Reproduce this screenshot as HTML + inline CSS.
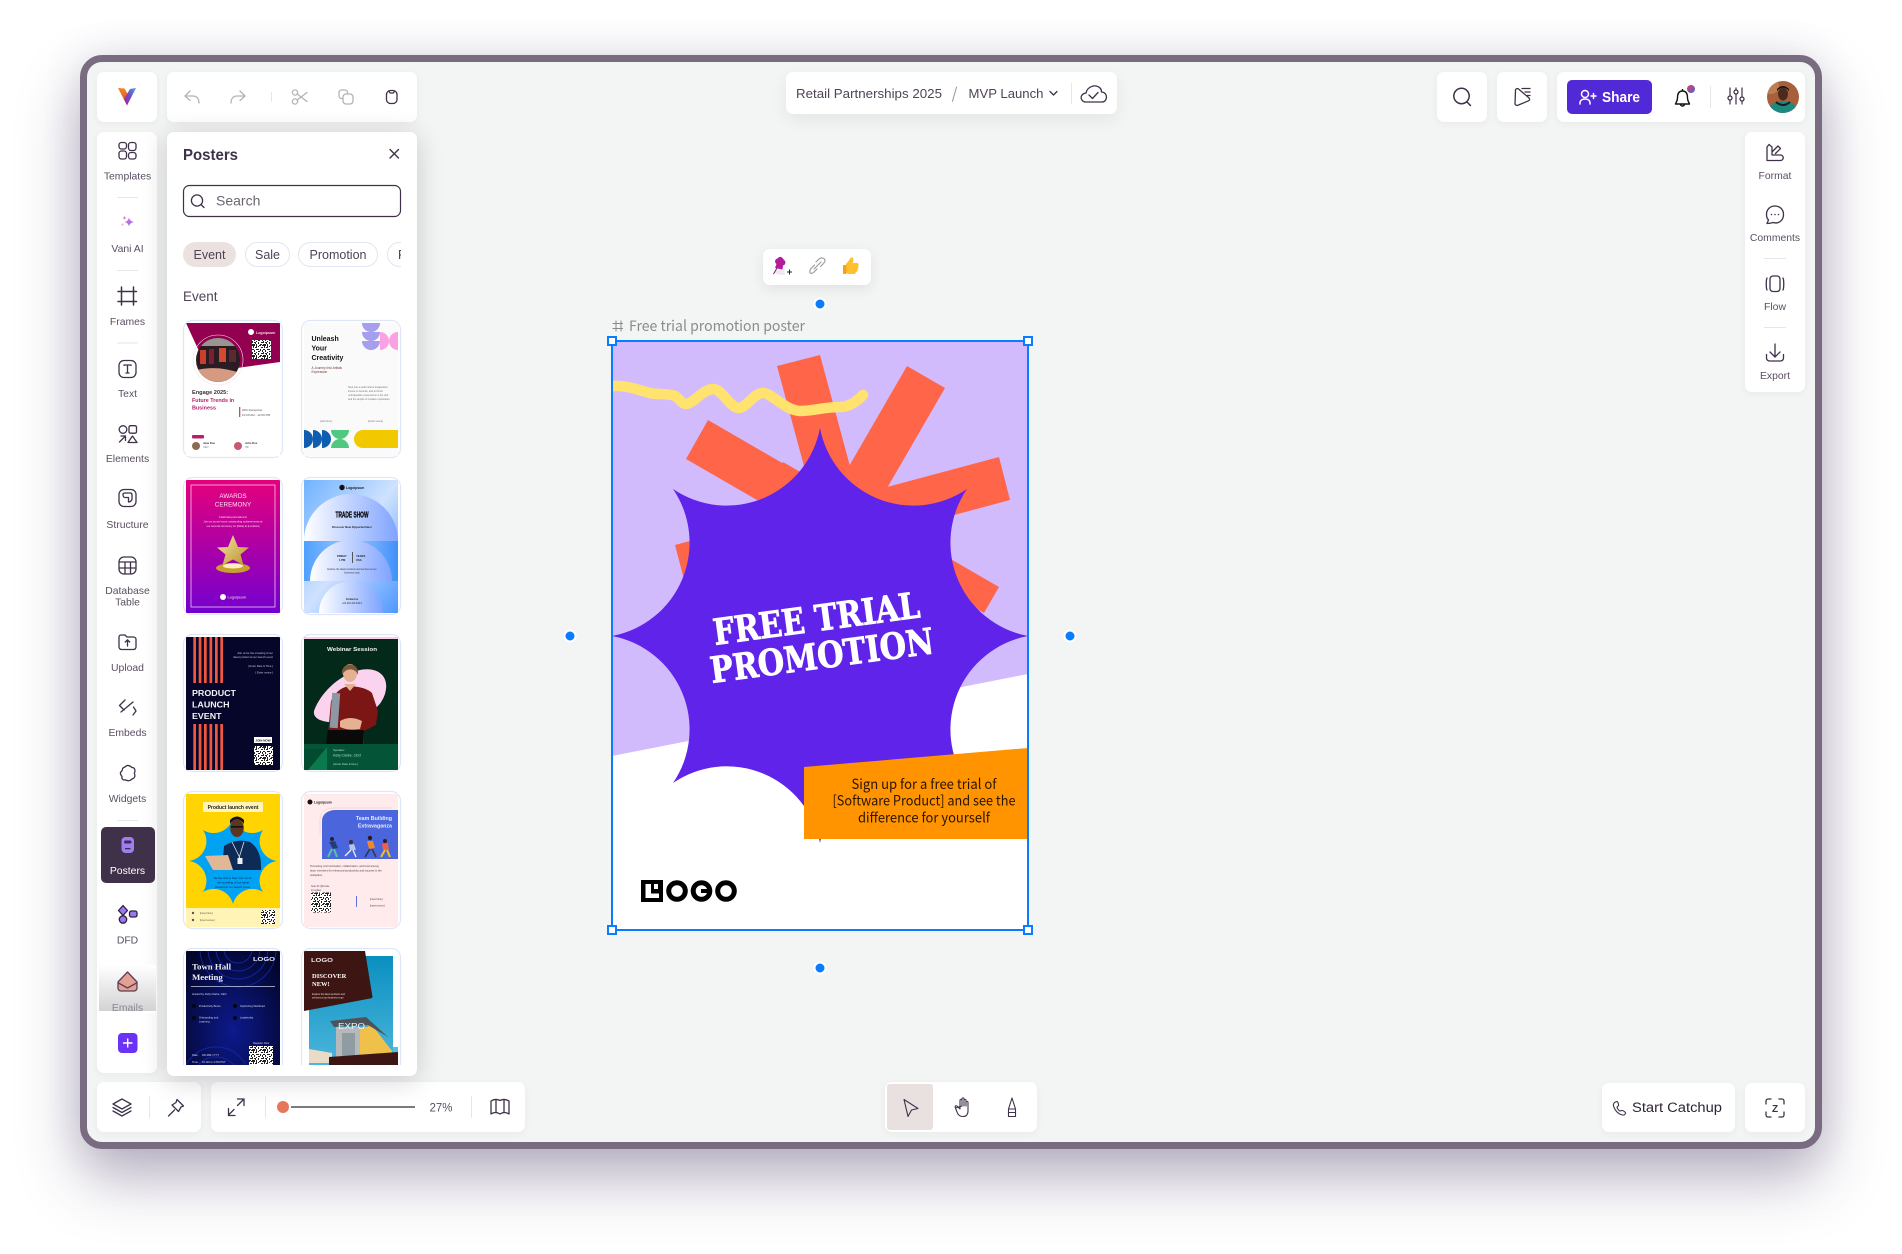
<!DOCTYPE html>
<html lang="en"><head><meta charset="utf-8"><title>Posters</title>
<style>
html,body{margin:0;padding:0;background:#fff;width:1902px;height:1254px;overflow:hidden}
body{position:relative;font-family:"Liberation Sans",sans-serif}
.frame{position:absolute;left:80px;top:55px;width:1728px;height:1080px;border:7px solid #7a6c80;border-radius:22px;background:#f3f5f4;box-shadow:0 30px 60px rgba(65,50,95,.36),0 0 40px rgba(65,50,95,.12)}
.c{position:absolute;background:#fff;border-radius:7px;box-shadow:0 2px 8px rgba(40,30,60,.05)}
svg{position:absolute;left:0;top:0}
text{font-family:"Liberation Sans",sans-serif}
.l{font-size:10.4px;fill:#5a4e63;text-anchor:middle}
.i{fill:none;stroke:#3f3149;stroke-width:1.3;stroke-linecap:round;stroke-linejoin:round}
.g{fill:none;stroke:#b4b2b6;stroke-width:1.3;stroke-linecap:round;stroke-linejoin:round}
.s{stroke:#e6e5e8;stroke-width:1}
.b{font-weight:700}
</style></head><body>
<div class="frame"></div>
<div class="c" style="left:97px;top:72px;width:60px;height:50px"></div>
<div class="c" style="left:167px;top:72px;width:250px;height:50px"></div>
<div class="c" style="left:97px;top:132px;width:60px;height:941px"></div>
<div class="c" style="left:786px;top:72px;width:331px;height:42px;box-shadow:0 6px 16px rgba(40,30,60,.07)"></div>
<div class="c" style="left:1437px;top:72px;width:50px;height:50px"></div>
<div class="c" style="left:1497px;top:72px;width:50px;height:50px"></div>
<div class="c" style="left:1557px;top:72px;width:248px;height:50px"></div>
<div class="c" style="left:1745px;top:132px;width:60px;height:260px"></div>
<div class="c" style="left:97px;top:1082px;width:104px;height:50px"></div>
<div class="c" style="left:211px;top:1082px;width:314px;height:50px"></div>
<div class="c" style="left:885px;top:1082px;width:152px;height:50px"></div>
<div class="c" style="left:1602px;top:1083px;width:133px;height:49px"></div>
<div class="c" style="left:1745px;top:1083px;width:60px;height:49px"></div>
<div class="c" style="left:763px;top:249px;width:108px;height:36px;box-shadow:0 4px 12px rgba(40,30,60,.09)"></div>
<div class="c" style="left:167px;top:132px;width:250px;height:944px;box-shadow:0 4px 26px rgba(30,25,45,.2)"></div>

<svg width="1902" height="1254" viewBox="0 0 1902 1254" xmlns="http://www.w3.org/2000/svg">
<defs>
<linearGradient id="vo" x1="0" y1="0" x2="0" y2="1"><stop offset="0" stop-color="#f58220"/><stop offset="1" stop-color="#d64b3a"/></linearGradient>
<linearGradient id="vb" x1="1" y1="0" x2="0" y2="1"><stop offset="0" stop-color="#4a9cf0"/><stop offset=".5" stop-color="#6a4fc8"/><stop offset="1" stop-color="#b01c8e"/></linearGradient>
<linearGradient id="em" x1="0" y1="0" x2="0" y2="1"><stop offset="0" stop-color="#fff"/><stop offset="1" stop-color="#d3d3d5"/></linearGradient>
<linearGradient id="aw" x1="0" y1="0" x2="0" y2="1"><stop offset="0" stop-color="#e5007c"/><stop offset="1" stop-color="#7300cf"/></linearGradient>
<linearGradient id="ts" x1="0" y1="0" x2="1" y2="1"><stop offset="0" stop-color="#6fb2ff"/><stop offset=".5" stop-color="#cfe2ff"/><stop offset="1" stop-color="#4d97ff"/></linearGradient>
<linearGradient id="ts2" x1="0" y1="0" x2="1" y2="0"><stop offset="0" stop-color="#fff"/><stop offset="1" stop-color="#7ea3ff"/></linearGradient>
<linearGradient id="ts3" x1="0" y1="0" x2="1" y2="0"><stop offset="0" stop-color="#4fa0ff"/><stop offset=".5" stop-color="#9fc8ff"/><stop offset="1" stop-color="#3f90fa"/></linearGradient>
<linearGradient id="gold" x1="0" y1="0" x2="1" y2="1"><stop offset="0" stop-color="#f7e6a0"/><stop offset="1" stop-color="#b98f2c"/></linearGradient>
<radialGradient id="nv" cx=".5" cy=".6" r=".7"><stop offset="0" stop-color="#0c1a8c"/><stop offset="1" stop-color="#03052a"/></radialGradient>
<linearGradient id="sky" x1="0" y1="0" x2="0" y2="1"><stop offset="0" stop-color="#0a8fc0"/><stop offset="1" stop-color="#57bde0"/></linearGradient>
<linearGradient id="sp" x1="0" y1="0" x2="1" y2="1"><stop offset="0" stop-color="#f36fd0"/><stop offset="1" stop-color="#7b6cf0"/></linearGradient>
<linearGradient id="dot" x1="0" y1="0" x2="1" y2="1"><stop offset="0" stop-color="#e5405a"/><stop offset="1" stop-color="#4a5fe0"/></linearGradient>
<pattern id="qr" width="11" height="11" patternUnits="userSpaceOnUse">
<rect width="11" height="11" fill="#fff"/><path d="M0 0h3v1h-3zM4 0h1v2h-1zM7 0h2v1h-2zM10 0h1v1h-1zM1 1h1v2h-1zM6 1h1v1h-1zM9 2h2v1h-2zM3 2h2v1h-2zM0 4h2v1h-2zM4 4h3v1h-3zM8 4h1v2h-1zM2 5h1v2h-1zM6 6h2v1h-2zM10 5h1v2h-1zM0 7h1v2h-1zM4 7h1v1h-1zM9 8h2v1h-2zM2 8h2v1h-2zM6 8h1v2h-1zM0 10h3v1h-3zM4 10h1v1h-1zM8 10h2v1h-2zM3 9h1v1h-1z" fill="#222"/></pattern>
<clipPath id="tc"><rect width="94" height="133" rx="1"/></clipPath>
<clipPath id="sc"><rect x="168" y="132" width="248" height="933"/></clipPath>
<clipPath id="ch"><rect x="183" y="240" width="218" height="30"/></clipPath>
<clipPath id="pc"><rect x="612" y="341" width="416" height="589"/></clipPath>
<clipPath id="ac"><circle cx="1783" cy="97" r="16"/></clipPath>
<clipPath id="c1"><circle cx="32" cy="37" r="22"/></clipPath>
</defs>

<!-- logo -->
<path d="M118 88L124.500 88.500 129.500 97 127 105.500Z" fill="url(#vo)"/>
<path d="M136 88L130 89 124 99 127 105.500Z" fill="url(#vb)"/>

<!-- top tools -->
<path class="g" d="M190 91L185 96 190 100.500M185 96H193C197 96 199 99 199 103"/>
<path class="g" d="M240 91L245 96 240 100.500M245 96H237C233 96 231 99 231 103"/>
<path class="s" d="M271.500 92V102" stroke="#ddd"/>
<g class="g"><circle cx="295" cy="92.500" r="2.600"/><circle cx="295" cy="101.500" r="2.600"/><path d="M297.200 94L307 101.500M297.200 100L307 92.500"/></g>
<g class="g"><rect x="343" y="94" width="10" height="10" rx="3"/><path d="M347.500 93.500V92.500A2.500 2.500 0 0 0 345 90H341.500A2.500 2.500 0 0 0 339 92.500V96A2.500 2.500 0 0 0 341.500 98.500H342"/></g>
<g class="i"><rect x="386.500" y="90.500" width="10.500" height="13" rx="4"/><path d="M389 91L390 93H393.500L394.500 91"/></g>

<!-- rail -->
<g class="i"><rect x="119" y="142.500" width="7.500" height="6.500" rx="2.500"/><rect x="128.500" y="142.500" width="7.500" height="8" rx="2.500"/><rect x="119" y="151" width="7.500" height="8" rx="2.500"/><rect x="128.500" y="152.500" width="7.500" height="6.500" rx="2.500"/></g>
<text class="l" x="127.500" y="179.500">Templates</text>
<path class="s" d="M117 197.500H138M117 270.500H138M117 343H138M117 820.500H138"/>
<path d="M129 217.500Q129.700 221.300 134 222Q129.700 222.700 129 226.500Q128.300 222.700 124.500 222Q128.300 221.300 129 217.500Z" fill="url(#sp)"/>
<path d="M124.500 215.500Q124.800 217.500 126.500 218Q124.800 218.500 124.500 220Q124.200 218.500 122.500 218Q124.200 217.500 124.500 215.500Z" fill="#ee7fd2"/><circle cx="122.500" cy="224.500" r="1" fill="#f3a0dc"/>
<text class="l" x="127.500" y="252">Vani AI</text>
<path class="i" style="stroke-width:1.500" d="M121.500 287V305M133.500 287V305M118 291.500H136.500M118 301.500H136.500"/>
<text class="l" x="127.500" y="325">Frames</text>
<rect class="i" x="119" y="360.500" width="17" height="17" rx="5"/><path class="i" d="M124 365.500V365H131V365.500M127.500 365V373M126 373H129"/>
<text class="l" x="127.500" y="397">Text</text>
<g class="i"><circle cx="123" cy="429.500" r="3.800"/><rect x="129" y="425.700" width="7.500" height="7.500" rx="1.500"/><path d="M119.500 442L125.500 436M121 436H125.500V440.500"/><path d="M132.500 436L137 442.500H128Z"/></g>
<text class="l" x="127.500" y="462">Elements</text>
<g class="i"><rect x="119" y="489.500" width="17" height="17" rx="5"/><path d="M123 494.500C123 493.500 124 493 125 493H130.500C131.500 493 132 494 132 495V499C132 500.500 130 502 128.500 502V497.500H125C124 497.500 123 496.500 123 495Z"/></g>
<text class="l" x="127.500" y="528">Structure</text>
<g class="i"><rect x="119" y="557" width="17" height="17" rx="5"/><path d="M119.500 562H135.500M119.500 568H135.500M125 562V573.500M130.500 562V573.500"/></g>
<text class="l" x="127.500" y="594">Database</text><text class="l" x="127.500" y="605.500">Table</text>
<g class="i"><path d="M119 637A2 2 0 0 1 121 635H125L127 637H133.500A2.500 2.500 0 0 1 136 639.500V647A2.500 2.500 0 0 1 133.500 649.500H121.500A2.500 2.500 0 0 1 119 647Z"/><path d="M127.500 646V640M125.300 642L127.500 639.800 129.700 642"/></g>
<text class="l" x="127.500" y="671">Upload</text>
<path class="i" d="M125 700L119.500 705.500 124 710M121 712L133 702M133.500 707L136 711 133 715"/>
<text class="l" x="127.500" y="736">Embeds</text>
<path class="i" d="M127 765.500C130 765 131 767 132 767.500C134 767.500 135 769 135 771C135 772 134 773 134.500 774C135.500 776 134.500 778 133 778.500C131.500 779 131 780.500 129.500 780.500C128 781.500 126 779.500 124.500 780C122.500 780 121.500 778.500 122 776.500C121 775.500 120 774.500 120.500 772.500C121.500 771 122.500 771 122.500 769C123 767 125 767.500 127 765.500Z"/>
<text class="l" x="127.500" y="802">Widgets</text>
<rect x="101" y="827" width="54" height="56" rx="5" fill="#3f3149"/>
<rect x="121.500" y="837" width="12.500" height="16" rx="4" fill="#a07df0"/><rect x="124" y="840.500" width="7.500" height="3" rx="1.500" fill="#3f3149"/><rect x="125" y="848" width="5.500" height="1.300" fill="#3f3149"/>
<text class="l" x="127.500" y="874" style="fill:#fff">Posters</text>
<g fill="#9a78ee" stroke="#2d2240" stroke-width="1.300"><path d="M123 905.500L127.500 910.500 123 915.500 118.500 910.500Z" stroke-linejoin="round"/><rect x="129.500" y="911" width="7.500" height="6" rx="1.800"/><circle cx="123" cy="919.500" r="3.700"/></g>
<text class="l" x="127.500" y="943.500">DFD</text>
<rect x="99" y="965" width="57" height="46" fill="url(#em)"/>
<rect x="99" y="1011" width="57" height="2" fill="#fff"/>
<path d="M118 982L127.500 972 137 982V988A3 3 0 0 1 134 991H121A3 3 0 0 1 118 988Z" fill="#e6a093" stroke="#5a4056" stroke-width="1.300" stroke-linejoin="round"/>
<path d="M118.500 983L127.500 988 136.500 983" fill="none" stroke="#5a4056" stroke-width="1.300"/>
<text class="l" x="127.500" y="1011" style="fill:#8a858f">Emails</text>
<rect x="118" y="1033" width="19.500" height="20" rx="4" fill="#6a32f5"/><path d="M127.700 1038.500V1047.500M123 1043H132.500" stroke="#fff" stroke-width="1.400"/>

<!-- panel -->
<text x="183" y="160" font-size="16" font-weight="700" fill="#3f3149" textLength="55" lengthAdjust="spacingAndGlyphs">Posters</text>
<path class="i" d="M390 149.500L398.500 158M398.500 149.500L390 158" style="stroke-width:1.400"/>
<rect x="183.500" y="185.500" width="217" height="31" rx="6" fill="#fff" stroke="#3f3149" stroke-width="1.200"/>
<circle class="i" cx="197" cy="200.500" r="5.600"/><path class="i" d="M201 204.500L204 207.500"/>
<text x="216" y="205.500" font-size="14" fill="#6b6470">Search</text>
<g clip-path="url(#ch)">
<rect x="183" y="242" width="53" height="25" rx="12.500" fill="#ebe2e0"/>
<text x="209.500" y="259" font-size="12.500" fill="#4f4357" text-anchor="middle">Event</text>
<rect x="245.500" y="242.500" width="44" height="24" rx="12" fill="#fff" stroke="#e3e5f2"/>
<text x="267.500" y="259" font-size="12.500" fill="#4f4357" text-anchor="middle">Sale</text>
<rect x="298.500" y="242.500" width="79" height="24" rx="12" fill="#fff" stroke="#e3e5f2"/>
<text x="338" y="259" font-size="12.500" fill="#4f4357" text-anchor="middle">Promotion</text>
<rect x="387.500" y="242.500" width="60" height="24" rx="12" fill="#fff" stroke="#e3e5f2"/>
<text x="398" y="259" font-size="12.500" fill="#4f4357">Product</text>
</g>
<text x="183" y="301" font-size="13.500" fill="#4f4357">Event</text>

<g clip-path="url(#sc)">
<g fill="#fff" stroke="#dfe6f8" stroke-width="1.200">
<rect x="183.500" y="320.500" width="99" height="137" rx="9"/><rect x="301.500" y="320.500" width="99" height="137" rx="9"/>
<rect x="183.500" y="477.500" width="99" height="137" rx="9"/><rect x="301.500" y="477.500" width="99" height="137" rx="9"/>
<rect x="183.500" y="634.500" width="99" height="137" rx="9"/><rect x="301.500" y="634.500" width="99" height="137" rx="9"/>
<rect x="183.500" y="791.500" width="99" height="137" rx="9"/><rect x="301.500" y="791.500" width="99" height="137" rx="9"/>
<rect x="183.500" y="948.500" width="99" height="137" rx="9"/><rect x="301.500" y="948.500" width="99" height="137" rx="9"/>
</g>

<!-- T1 -->
<g transform="translate(186 323)" clip-path="url(#tc)">
<rect width="94" height="133" fill="#fff"/>
<path d="M0 0H94V39L44 46H20L12 26Z" fill="#93004f"/>
<circle cx="32" cy="37" r="25" fill="none" stroke="#f6e3ec" stroke-width=".6"/>
<circle cx="32" cy="37" r="22" fill="#2a1c22"/>
<g clip-path="url(#c1)"><rect x="10" y="15" width="44" height="8" fill="#9a9590"/><rect x="14" y="27" width="6" height="14" fill="#c8402c"/><rect x="23" y="26" width="5" height="15" fill="#7b2030"/><rect x="33" y="25" width="7" height="14" fill="#d24a30"/><rect x="43" y="27" width="7" height="12" fill="#5a2a30"/><path d="M10 47Q32 42 54 50V60H10Z" fill="#d49a82"/></g>
<rect x="66" y="17" width="19" height="19" fill="url(#qr)"/>
<circle cx="65" cy="9" r="3" fill="#fff"/><text x="70" y="11" font-size="3.600" fill="#f5d8e6" class="b">Logoipsum</text>
<text x="6" y="71" font-size="5.600" font-weight="700" fill="#3a3034">Engage 2025:</text>
<text x="6" y="79" font-size="5.400" font-weight="700" fill="#b81d6e">Future Trends in</text>
<text x="6" y="86.500" font-size="5.400" font-weight="700" fill="#b81d6e">Business</text>
<rect x="53" y="84" width="1.300" height="10" fill="#c04a88"/><text x="56" y="88" font-size="3" fill="#555">20th December</text><text x="56" y="93" font-size="3" fill="#555">10:00 AM - 12:00 PM</text>
<rect x="6" y="112" width="12" height="3.500" rx="1" fill="#b81d6e"/>
<circle cx="10" cy="123" r="4" fill="#8c6a52"/><text x="17" y="121" font-size="2.700" class="b" fill="#333">Jane Doe</text><text x="17" y="125" font-size="2.500" fill="#777">CEO</text>
<circle cx="52" cy="123" r="4" fill="#c85a6e"/><text x="59" y="121" font-size="2.700" class="b" fill="#333">John Doe</text><text x="59" y="125" font-size="2.500" fill="#777">HR</text>
</g>
<!-- T2 -->
<g transform="translate(304 323)" clip-path="url(#tc)">
<rect width="94" height="133" fill="#fafafa"/>
<text x="7.500" y="18" font-size="7" font-weight="700" fill="#111">Unleash</text><text x="7.500" y="27.500" font-size="7" font-weight="700" fill="#111">Your</text><text x="7.500" y="37" font-size="7" font-weight="700" fill="#111">Creativity</text>
<text x="7.500" y="46" font-size="3.200" fill="#6b3b3b">A Journey Into Artistic</text><text x="7.500" y="50" font-size="3.200" fill="#6b3b3b">Expression</text>
<g font-size="2.500" fill="#777"><text x="44" y="65">Step into a world where imagination</text><text x="44" y="69">knows no bounds, and art finds</text><text x="44" y="73">unforgettable expressions in the ebb</text><text x="44" y="77">and the depths of creative exploration</text><text x="16" y="99">[start time]</text><text x="64" y="99">[insert venue]</text></g>
<g fill="#a59fee"><path d="M58 0H76A9 9 0 0 1 58 0Z"/><path d="M58 9H76A9 9 0 0 1 58 9Z"/><path d="M58 18H76A9 9 0 0 1 58 18Z"/></g>
<path d="M76 9A9 9 0 0 1 76 27Z" fill="#fba0e3"/><path d="M94 9A9 9 0 0 0 94 27Z" fill="#fba0e3"/>
<path d="M0 107A9 9 0 0 1 0 125ZM9 107A9 9 0 0 1 9 125ZM18 107A9 9 0 0 1 18 125Z" fill="#0f5db0"/>
<path d="M27 107H45A9 9 0 0 1 27 107ZM27 125H45A9 9 0 0 0 27 125Z" fill="#4ec97f"/>
<path d="M59 107H94V125H59A9 9 0 0 1 59 107Z" fill="#f2c800"/>
</g>
<!-- T3 -->
<g transform="translate(186 480)" clip-path="url(#tc)">
<rect width="94" height="133" fill="url(#aw)"/>
<rect x="5" y="5" width="84" height="122" fill="none" stroke="#f6c4ea" stroke-width=".8"/>
<text x="47" y="18" font-size="6.300" fill="#ffe1f1" text-anchor="middle">AWARDS</text><text x="47" y="26.500" font-size="6.300" fill="#ffe1f1" text-anchor="middle">CEREMONY</text>
<g font-size="2.700" fill="#fbd9ef" text-anchor="middle"><text x="47" y="38">Celebrating Excellence!</text><text x="47" y="42.500">Join us as we honor outstanding achievements at</text><text x="47" y="47">our second ceremony on [Date] at [Location]</text></g>
<ellipse cx="47" cy="88" rx="17" ry="5" fill="#c8a02e"/><ellipse cx="47" cy="86" rx="10" ry="2.500" fill="#f8eec0"/>
<path d="M47 55L52 67 63 67.500 54.500 74.500 57.500 85 47 79.500 36.500 85 39.500 74.500 31 67.500 42 67Z" fill="url(#gold)"/>
<circle cx="37" cy="117" r="3" fill="#fff"/><text x="41.500" y="118.500" font-size="3.800" fill="#fbe0f2">Logoipsum</text>
</g>
<!-- T4 -->
<g transform="translate(304 480)" clip-path="url(#tc)">
<rect width="94" height="133" fill="url(#ts)"/>
<path d="M0 61A47 47 0 0 1 94 61Z" fill="url(#ts2)"/>
<rect y="61" width="94" height="40" fill="url(#ts3)"/>
<path d="M6 101A41 41 0 0 1 88 101Z" fill="url(#ts2)"/>
<path d="M15 133A32 32 0 0 1 79 133Z" fill="url(#ts2)"/>
<circle cx="38" cy="7.500" r="2.700" fill="#111"/><text x="42" y="9" font-size="3.400" class="b" fill="#222">Logoipsum</text>
<text x="48" y="37.500" font-size="8" font-weight="700" text-anchor="middle" fill="#0b0b0b" stroke="#0b0b0b" stroke-width=".35" textLength="33" lengthAdjust="spacingAndGlyphs">TRADE SHOW</text>
<text x="48" y="48" font-size="2.900" class="b" text-anchor="middle" fill="#222">Discover New Opportunities!</text>
<g font-size="2.700" class="b" fill="#222"><text x="33" y="77">FRIDAY</text><text x="35" y="81">1 PM</text><text x="52" y="77">YEARS</text><text x="52" y="81">USA</text></g><rect x="48" y="72" width="1" height="11" fill="#555"/>
<text x="48" y="90" font-size="2.400" text-anchor="middle" fill="#334">Explore the latest products and services at our</text><text x="48" y="93.500" font-size="2.400" text-anchor="middle" fill="#334">business expo</text>
<text x="48" y="120" font-size="2.400" class="b" text-anchor="middle" fill="#222">Contact us</text><text x="48" y="124" font-size="2.400" text-anchor="middle" fill="#222">+01 234 123 432 0</text>
</g>
<!-- T5 -->
<g transform="translate(186 637)" clip-path="url(#tc)">
<rect width="94" height="133" fill="#05062a"/>
<g fill="#f1573f"><rect x="7.300" width="2.700" height="46"/><rect x="12.700" width="2.700" height="46"/><rect x="18" width="2.700" height="46"/><rect x="23.500" width="2.700" height="46"/><rect x="29" width="2.700" height="46"/><rect x="34.300" width="2.700" height="46"/>
<rect x="7.300" y="87" width="2.700" height="46"/><rect x="12.700" y="87" width="2.700" height="46"/><rect x="18" y="87" width="2.700" height="46"/><rect x="23.500" y="87" width="2.700" height="46"/><rect x="29" y="87" width="2.700" height="46"/><rect x="34.300" y="87" width="2.700" height="46"/></g>
<g font-size="8.600" font-weight="700" fill="#f4f4f6"><text x="6" y="59" textLength="44" lengthAdjust="spacingAndGlyphs">PRODUCT</text><text x="6" y="70.500" textLength="37.500" lengthAdjust="spacingAndGlyphs">LAUNCH</text><text x="6" y="82" textLength="29.500" lengthAdjust="spacingAndGlyphs">EVENT</text></g>
<g font-size="2.700" fill="#c8c8d4" text-anchor="end"><text x="87" y="17">Join us for the unveiling of our</text><text x="87" y="21">latest product at our launch event</text><text x="87" y="30">[ Enter Date &amp; Time ]</text><text x="87" y="36.500">[ Enter venue ]</text></g>
<rect x="68" y="100" width="18" height="6" fill="#fff"/><text x="77" y="104.500" font-size="3" text-anchor="middle" font-weight="700" fill="#111">JOIN NOW</text>
<rect x="68" y="109" width="19" height="19" fill="url(#qr)"/>
</g>
<!-- T6 -->
<g transform="translate(304 637)" clip-path="url(#tc)">
<rect width="94" height="133" fill="#02291a"/><rect width="94" height="2" fill="#fbcfe8"/>
<text x="48" y="14" font-size="5.500" font-weight="700" fill="#f2f2f2" text-anchor="middle" textLength="50" lengthAdjust="spacingAndGlyphs">Webinar Session</text>
<path d="M10 74C14 62 28 42 52 34C72 28 84 38 82 52C80 68 66 78 50 82C32 88 8 86 10 74Z" fill="#fcd3ee"/>
<path d="M23 108L27 64Q34 50 46 49Q62 50 68 56L74 74 72 88 64 92 60 94V108Z" fill="#7b1614"/>
<path d="M24 93H60L59 108H22Z" fill="#0a0a0a"/>
<rect x="27" y="56" width="8" height="35" fill="#8d98a4" transform="rotate(4 31 73)"/>
<path d="M36 84Q46 78 58 84L56 92Q44 94 36 90Z" fill="#e6b093"/>
<path d="M40 47L46 54 52 47Z" fill="#e6b093"/>
<ellipse cx="46" cy="36" rx="7" ry="9" fill="#e6b093"/>
<path d="M38 38C36 24 56 24 54 38C52 31 42 30 38 38Z" fill="#7b5a3a"/>
<rect y="107" width="94" height="26" fill="#045538"/><rect y="112" width="23" height="21" fill="#024a30"/><path d="M4 133L23 110V133Z" fill="#0a7a4c"/>
<g fill="#b6dccc"><text x="29" y="114" font-size="3">Speaker:</text><text x="29" y="119.500" font-size="3.500">Kelly Clarke, CEO</text><text x="29" y="128" font-size="2.800">[ Enter Date &amp; time ]</text></g>
</g>
<!-- T7 -->
<g transform="translate(186 794)" clip-path="url(#tc)">
<rect width="94" height="133" fill="#ffd400"/><rect y="114" width="94" height="19" fill="#fff4b5"/>
<rect x="17" y="8" width="60" height="10" rx="1" fill="#fff5b8"/>
<text x="47" y="15" font-size="5" font-weight="700" fill="#222" text-anchor="middle">Product launch event</text>
<path d="M47 24A20 20 0 0 0 77 36A20 20 0 0 0 91 67A20 20 0 0 0 77 98A20 20 0 0 0 47 110A20 20 0 0 0 17 98A20 20 0 0 0 3 67A20 20 0 0 0 17 36A20 20 0 0 0 47 24Z" fill="#00a3f4"/>
<path d="M36 76L38 52Q50 44 64 48Q76 56 75 76Z" fill="#0e2b55"/>
<ellipse cx="51" cy="34" rx="6.800" ry="9" fill="#5c3623"/><path d="M44 30Q51 20 58 30V26Q51 19 44 26Z" fill="#151010"/><rect x="45" y="32" width="12" height="1.600" fill="#111"/>
<path d="M19 62L42 61 47 76H27Z" fill="#e0b895"/><path d="M46 48L54 64M58 48L53 64" stroke="#d7e4f4" stroke-width=".8"/><rect x="51.500" y="64" width="5" height="6" fill="#e9f0f6"/>
<g font-size="2.900" fill="#06204a" text-anchor="middle"><text x="47" y="85">Be the first to See! Join us for</text><text x="47" y="89.500">the unveiling of our latest</text><text x="47" y="94">product at our launch event.</text></g>
<g font-size="2.400" fill="#555"><text x="14" y="120">[insert time]</text><text x="14" y="127">[insert venue]</text></g><circle cx="7" cy="119" r="1.200" fill="#555"/><circle cx="7" cy="126" r="1.200" fill="#555"/>
<rect x="75" y="116" width="14" height="14" fill="url(#qr)"/>
</g>
<!-- T8 -->
<g transform="translate(304 794)" clip-path="url(#tc)">
<rect width="94" height="133" fill="#ffeaec"/>
<circle cx="6" cy="8" r="2.500" fill="#111"/><text x="10" y="9.500" font-size="3.300" class="b" fill="#222">Logoipsum</text>
<path d="M16 40V26C16 18 22 14 30 14H88" fill="none" stroke="#e5c9cc" stroke-width=".5"/>
<path d="M18 65V27C18 20 24 16 32 16H94V65Z" fill="#4b66dd"/>
<g font-size="5.300" font-weight="700" fill="#e9ecff" text-anchor="end"><text x="88" y="26">Team Building</text><text x="88" y="33.500">Extravaganza</text></g>
<g><circle cx="28" cy="45" r="2" fill="#223"/><path d="M25 48L31 47 34 54 29 55Z" fill="#273a78"/><path d="M28 55L24 63M30 55L33 63" stroke="#55c4a5" stroke-width="2"/>
<circle cx="47" cy="48" r="2" fill="#4a2a2a"/><path d="M45 51L50 50 52 56 46 56Z" fill="#b0c8e8"/><path d="M47 56L41 62M49 56L52 63" stroke="#f3f3f3" stroke-width="1.300"/>
<circle cx="66" cy="44" r="2.200" fill="#2a1a1a"/><path d="M63 47L69 47 71 54 65 55Z" fill="#f08a25"/><path d="M66 55L61 63M68 55L72 63" stroke="#32395c" stroke-width="1.700"/>
<circle cx="81" cy="47" r="2" fill="#3a1a1a"/><path d="M78 50L84 49 85 56 79 56Z" fill="#ef5f4d"/><path d="M81 56L77 63M83 56L86 63" stroke="#f2c21c" stroke-width="2"/></g>
<g font-size="2.700" fill="#4a4048"><text x="6" y="73">Promoting communication, collaboration, and trust among</text><text x="6" y="77.500">team members for enhanced productivity and success in the</text><text x="6" y="82">workplace.</text>
<text x="7" y="93" font-size="2.300">Scan for QR code</text><text x="7" y="97" font-size="2.300">to register</text><text x="66" y="106" font-size="2.400">[insert time]</text><text x="66" y="112.500" font-size="2.400">[insert venue]</text></g>
<rect x="7" y="98.500" width="20" height="20" fill="url(#qr)"/><rect x="52" y="102" width=".9" height="11" fill="#4b66dd"/>
</g>
<!-- T9 -->
<g transform="translate(186 951)" clip-path="url(#tc)">
<rect width="94" height="133" fill="url(#nv)"/>
<g fill="none" stroke="#0f27a8" stroke-width=".9"><circle cx="52" cy="-2" r="14"/><circle cx="52" cy="-2" r="22"/><circle cx="52" cy="-2" r="30"/><circle cx="52" cy="-2" r="38"/><circle cx="30" cy="130" r="14"/><circle cx="30" cy="130" r="24"/><circle cx="30" cy="130" r="34"/></g>
<g font-size="8.800" font-weight="700" fill="#eceef8"><text x="6" y="18.500" style="font-family:'Liberation Serif',serif">Town Hall</text><text x="6" y="29" style="font-family:'Liberation Serif',serif">Meeting</text></g>
<text x="67" y="10" font-size="5.500" font-weight="700" fill="#eee" textLength="22" lengthAdjust="spacingAndGlyphs">LOGO</text>
<rect x="5" y="35" width="84" height=".8" fill="#bfc2d8"/>
<g font-size="2.700" fill="#d8daf0"><text x="6" y="44">Hosted by Kelly Clarke, CEO</text><text x="13" y="56">Productivity Boost</text><text x="54" y="56">Optimizing Workload</text><text x="13" y="67.500">Onboarding and</text><text x="13" y="71.500">Learning</text><text x="54" y="67.500">Leadership</text><text x="6" y="105">Date :</text><text x="16" y="105">DD-MM-YYYY</text><text x="6" y="112">Time :</text><text x="16" y="112">10 AM to 4 PM PST</text><text x="67" y="93">Register Now</text></g>
<g fill="#050510"><circle cx="8" cy="55" r="2"/><circle cx="49" cy="55" r="2"/><circle cx="8" cy="67" r="2"/><circle cx="49" cy="67" r="2"/></g>
<rect x="63" y="95" width="24" height="24" fill="url(#qr)"/>
</g>
<!-- T10 -->
<g transform="translate(304 951)" clip-path="url(#tc)">
<rect width="94" height="133" fill="#fff"/><rect x="5" y="5" width="84" height="128" fill="url(#sky)"/>
<rect x="89" y="96" width="5" height="10" fill="#57bde0"/>
<path d="M32 76H64V108H32Z" fill="#b5b9ba"/><rect x="38" y="82" width="13" height="28" fill="#8f9ca2"/><path d="M56 78L68 74 88 100V106H56Z" fill="#efc14a"/>
<path d="M26 70L62 66 84 86 64 74 30 76Z" fill="#4d5358"/><path d="M5 98L28 102V112H5Z" fill="#e8dcc8"/>
<text x="34" y="78" font-size="8" fill="#f4f4f4" textLength="27" lengthAdjust="spacingAndGlyphs">EXPO</text>
<path d="M0 0H61L68.500 46Q68.500 47 66 47.500L0 60Z" fill="#3d1513"/>
<path d="M25 106L94 101V133H25Z" fill="#3d1513"/>
<text x="7" y="11" font-size="5" font-weight="700" fill="#f2e8e6" textLength="22" lengthAdjust="spacingAndGlyphs">LOGO</text>
<g font-size="6.500" font-weight="700" fill="#fff"><text x="8" y="27" style="font-family:'Liberation Serif',serif">DISCOVER</text><text x="8" y="35" style="font-family:'Liberation Serif',serif">NEW!</text></g>
<text x="8" y="44" font-size="2.400" fill="#e8d8d4">Explore the latest products and</text><text x="8" y="47.500" font-size="2.400" fill="#e8d8d4">services at our business expo</text>
</g>
</g>

<!-- bottom left -->
<g class="i"><path d="M122 1099L131 1104 122 1109 113 1104Z"/><path d="M113 1107.500L122 1112.500 131 1107.500M113 1111L122 1116 131 1111"/></g>
<path class="s" d="M149.500 1096V1118M265.500 1096V1118M471.500 1096V1118"/>
<path class="i" d="M168.500 1116L174.500 1110M177 1099.500L183.500 1106 181 1107 178.500 1111.500 172 1105 176 1102.500Z"/>
<path class="i" d="M228.500 1115L234 1109.500M244 1099L237.500 1105.500M237.500 1099H244V1105.500M228.500 1108.500V1115.500H235"/>
<circle cx="283" cy="1107" r="6" fill="#e5775a"/><rect x="291" y="1106" width="124" height="2" fill="#7b7b7d"/>
<text x="429.500" y="1111.500" font-size="12" fill="#5a4e63" textLength="23" lengthAdjust="spacingAndGlyphs">27%</text>
<g class="i"><path d="M491 1101C494 1099 497 1099 500 1100.500C503 1099 506 1099 509 1101V1114C506 1112 503 1112 500 1114C497 1112 494 1112 491 1114Z"/><path d="M496 1100V1112.500M504 1100V1112.500"/></g>

<!-- bottom centre -->
<rect x="887" y="1084" width="46" height="46" rx="3" fill="#e9e1e0"/>
<path class="i" d="M904 1099.500L918 1108.500 911.500 1110 908 1116.500Z" style="stroke-width:1.100"/>
<path class="i" style="stroke-width:1.100" d="M955.500 1108L957 1112C958 1115 960 1116.500 963 1116.500C966 1116.500 968 1114.500 968 1111V1102.500C968 1101 966 1101 966 1102.500V1106M966 1106V1100.500C966 1099 964 1099 964 1100.500V1106M964 1106V1099C964 1097.500 962 1097.500 962 1099V1106M962 1106V1100.500C962 1099 960 1099 960 1100.500V1109L957.500 1106.500C956 1105 954.500 1106 955.500 1108Z"/>
<path class="i" style="stroke-width:1.100" d="M1012 1098L1015.500 1109H1008.500ZM1008.500 1109V1116.500H1015.500V1109M1008.500 1112.500H1015.500"/>

<!-- bottom right -->
<path class="i" d="M1617 1101.500C1614 1102 1613 1104 1613.500 1106C1615 1110.500 1618 1114 1622.500 1115C1624 1115.300 1625.500 1114.500 1625.500 1113C1625.500 1112 1622.500 1110 1621.500 1110.500C1620.500 1111 1619.800 1111.300 1619 1110.500C1618 1109.500 1617.500 1108.500 1617 1107.500C1616.800 1106.500 1618 1106.500 1618.500 1105.500C1618.800 1104.500 1618 1102 1617 1101.500Z" style="stroke-width:1.100"/>
<text x="1632" y="1112" font-size="13.500" fill="#2d2533" textLength="90" lengthAdjust="spacingAndGlyphs">Start Catchup</text>
<path class="i" d="M1771 1099H1768A2 2 0 0 0 1766 1101V1104M1779 1099H1782A2 2 0 0 1 1784 1101V1104M1766 1112V1115A2 2 0 0 0 1768 1117H1771M1784 1112V1115A2 2 0 0 1 1782 1117H1779"/>
<text x="1775" y="1112" font-size="10" font-weight="700" fill="#3f3149" text-anchor="middle">Z</text>

<!-- top centre -->
<text x="796" y="98" font-size="13" fill="#4f4357" textLength="146" lengthAdjust="spacingAndGlyphs">Retail Partnerships 2025</text>
<path d="M956.700 86.700L952.300 101.700" stroke="#9a95a0" stroke-width="1"/>
<text x="968.500" y="98" font-size="13" fill="#4f4357" textLength="75" lengthAdjust="spacingAndGlyphs">MVP Launch</text>
<path class="i" d="M1050 91.500L1053.500 95 1057 91.500"/>
<path class="s" d="M1071.500 83V104"/>
<path class="i" d="M1086 102C1080 102 1079 94 1086 93C1087 87 1095 83.500 1100 88C1101 89 1101.500 91 1101.500 92C1108 92 1108 102 1102 102Z"/>
<path class="i" d="M1089 95L1092.500 98.500 1098 92.500"/>

<!-- top right -->
<circle class="i" cx="1461.500" cy="96" r="7.700" style="stroke-width:1.500"/><path class="i" d="M1467 102L1470.500 105.500" style="stroke-width:1.500"/>
<path class="i" d="M1515.500 91C1515 89 1517 88 1518.500 89L1528.500 97.500C1530 98.800 1530 100 1528.500 100.800L1518.500 105C1517 106 1515 105 1515 103.500ZM1522 88.500H1530M1525 92H1530M1527 95.500H1530"/>
<rect x="1567" y="80" width="85" height="34" rx="5" fill="#5129d6"/>
<g fill="none" stroke="#fff" stroke-width="1.500" stroke-linecap="round"><circle cx="1585" cy="94" r="3.500"/><path d="M1580 104V103C1580 100.500 1582 99 1585 99C1588 99 1590 100.500 1590 103V104M1591 96H1596M1593.500 93.500V98.500"/></g>
<text x="1602" y="102" font-size="14.500" font-weight="700" fill="#fff" textLength="38" lengthAdjust="spacingAndGlyphs">Share</text>
<path d="M1682.500 91C1678.500 91 1677.500 94 1677.500 98C1677.500 101 1676 102.500 1675.500 104H1689.500C1689 102.500 1687.500 101 1687.500 98C1687.500 94 1686.500 91 1682.500 91ZM1682.500 91V89M1680.500 104.500C1681 106.500 1684 106.500 1684.500 104.500" fill="none" stroke="#111" stroke-width="1.400" stroke-linejoin="round"/>
<circle cx="1691" cy="89" r="4" fill="url(#dot)"/>
<path class="s" d="M1710.500 86V108"/>
<g class="i"><path d="M1730 88V104M1736 88V104M1742 88V104" style="stroke-width:1.200"/><circle cx="1730" cy="98" r="2" fill="#fff"/><circle cx="1736" cy="92" r="2" fill="#fff"/><circle cx="1742" cy="99" r="2" fill="#fff"/></g>
<g clip-path="url(#ac)"><rect x="1767" y="81" width="32" height="32" fill="#a8603c"/><circle cx="1771" cy="86" r="8" fill="#bd7d55"/><path d="M1769 113C1769 104 1775 101 1783 101C1791 101 1797 104 1797 113Z" fill="#1d8a80"/><path d="M1776 102Q1783 108 1790 102" fill="none" stroke="#1b1b1b" stroke-width="2"/><ellipse cx="1783" cy="94" rx="5" ry="6.500" fill="#4a2a1c"/><path d="M1777 91Q1783 84 1789 91V89Q1783 83 1777 89Z" fill="#111"/></g>

<!-- right panel -->
<g class="i"><path d="M1767 160V147L1769 144.500 1772 147V154.500M1772 152L1778 146 1780.500 148.500 1775.500 153.500M1767 160.500H1780.500A2.700 2.700 0 0 0 1780.500 155H1772"/></g>
<text class="l" x="1775" y="179">Format</text>
<g class="i"><path d="M1775 206C1770 206 1766.500 209.500 1766.500 214.500C1766.500 217 1767.500 219 1768.500 220L1767 223.500C1769 223.500 1771.500 223 1773 222.500C1780 224.500 1783.500 219 1783.500 214.500C1783.500 209.500 1780 206 1775 206Z"/></g>
<g fill="#3f3149"><circle cx="1771.500" cy="214.500" r=".8"/><circle cx="1775" cy="214.500" r=".8"/><circle cx="1778.500" cy="214.500" r=".8"/></g>
<text class="l" x="1775" y="241">Comments</text>
<path class="s" d="M1764 258.500H1786M1764 327.500H1786"/>
<g class="i"><rect x="1770" y="276" width="10" height="15.500" rx="3"/><path d="M1767 278C1766 280 1766 288 1767 290M1783 278C1784 280 1784 288 1783 290"/></g>
<text class="l" x="1775" y="310">Flow</text>
<path class="i" d="M1775 344V356.500M1770 352L1775 357 1780 352M1766.500 354.500V358A3 3 0 0 0 1769.500 361H1780.500A3 3 0 0 0 1783.500 358V354.500"/>
<text class="l" x="1775" y="379">Export</text>

<!-- reaction bar -->
<ellipse cx="782" cy="272" rx="7" ry="3" fill="#f0e8f0"/>
<path d="M777.500 258.500A3 3 0 0 1 782 257.500L785 261A3 3 0 0 1 783 265.500L782.500 269.500 775 268 776.500 264A3 3 0 0 1 777.500 258.500Z" fill="#b31d9a"/><path d="M777 268L773.500 274" stroke="#7a1a70" stroke-width="1"/>
<circle cx="789.500" cy="272" r="5" fill="#fff"/><path d="M787 272H792M789.500 269.500V274.500" stroke="#222" stroke-width="1"/>
<path d="M816 262L819 259C821 257 825 258 825 260.500C825 262 824.500 262.500 823.500 263.500L820.500 266.500M817 269L814 272C812 274 809 274 810 270.500C810 269.500 811 268.500 811.500 268L814.500 265M814 269L821 262" fill="none" stroke="#9f9ba2" stroke-width="1.200" stroke-linecap="round"/>
<path d="M846 264L850 259C850.500 257 852 257 853 258C854 260 853 262 852.500 263H857C859 263 859 265 858 266C859 267 858.500 269 857.500 269C858 270.500 857 272 856 272C855.500 274 854.500 274 853 274H849C847.500 274 846 273 846 272Z" fill="#ffc02e"/><rect x="843" y="265" width="3.500" height="9" rx="1" fill="#f4a21a"/>

<!-- frame label -->
<path d="M616 320.500V331.500M621 320.500V331.500M612.500 323.500H623M612.500 328.500H623" stroke="#8a8a8a" stroke-width="1" fill="none"/>
<text x="629" y="331" font-size="14.500" fill="#8b8b8b" textLength="176" lengthAdjust="spacingAndGlyphs" style="font-family:'Noto Sans CJK JP','Liberation Sans',sans-serif">Free trial promotion poster</text>

<!-- poster -->
<g clip-path="url(#pc)">
<rect x="612" y="341" width="416" height="589" fill="#d2bbfd"/>
<path d="M612 756L1028 674V930H612Z" fill="#fff"/>
<g fill="#ff6548">
<path d="M777 366L820 355 885 596 842 607Z"/>
<path d="M907 366L945 388 820 604 782 582Z"/>
<path d="M999 457L1010 500 768 565 757 522Z"/>
<path d="M708 420L686 459 902 584 924 545Z"/>
<path d="M675 545L916 480 927 522 686 587Z"/>
<path d="M999 587L783 462 768 488 984 613Z"/>
</g>
<path d="M612 386C625 385 635 389 650 393C658 395 668 393 675 396C680 399 682 404 686 404C693 404 703 389 713 389C722 389 730 408 739 408C746 408 754 393 763 393C772 393 784 410 800 411C812 411 825 407 840 407C850 407 857 401 863 395" fill="none" stroke="#ffe36e" stroke-width="10.500" stroke-linecap="round" stroke-linejoin="round"/>
<path d="M820 428A95 95 0 0 0 967 489A95 95 0 0 0 1028 636A95 95 0 0 0 967 783A95 95 0 0 0 820 843A95 95 0 0 0 673 783A95 95 0 0 0 612 636A95 95 0 0 0 673 489A95 95 0 0 0 820 428Z" fill="#5f23e9"/>
<g fill="#fff" stroke="#fff" stroke-width=".8" font-weight="700">
<text transform="translate(715 645) rotate(-7.700)" font-size="36" textLength="208" lengthAdjust="spacingAndGlyphs" style="font-family:'DejaVu Serif','Liberation Serif',serif">FREE TRIAL</text>
<text transform="translate(712 683) rotate(-7.600)" font-size="36" textLength="225" lengthAdjust="spacingAndGlyphs" style="font-family:'DejaVu Serif','Liberation Serif',serif">PROMOTION</text>
</g>
<path d="M804 767L1028 748V839H804Z" fill="#ff9400"/>
<g font-size="14" fill="#2a1500" text-anchor="middle" style="font-family:'Noto Sans CJK JP','Liberation Sans',sans-serif">
<text x="924" y="789" textLength="145" lengthAdjust="spacingAndGlyphs" style="font-family:'Noto Sans CJK JP','Liberation Sans',sans-serif">Sign up for a free trial of</text>
<text x="924" y="805.500" textLength="183" lengthAdjust="spacingAndGlyphs" style="font-family:'Noto Sans CJK JP','Liberation Sans',sans-serif">[Software Product] and see the</text>
<text x="924" y="822.500" textLength="132" lengthAdjust="spacingAndGlyphs" style="font-family:'Noto Sans CJK JP','Liberation Sans',sans-serif">difference for yourself</text>
</g>
<rect x="641" y="880" width="22" height="22" fill="#000"/><path d="M645.500 884H651V893.500H659V898H645.500Z" fill="#fff"/><rect x="654" y="884" width="4" height="5" fill="#fff"/>
<g fill="none" stroke="#000" stroke-width="5"><circle cx="677" cy="891" r="8.300"/><circle cx="726" cy="891" r="8.300"/><circle cx="701.500" cy="891" r="8.300"/></g>
<rect x="701" y="889" width="11" height="4" fill="#000"/>
</g>
<rect x="612" y="341" width="416" height="589" fill="none" stroke="#0a7cff" stroke-width="2"/>
<g fill="#fff" stroke="#0a7cff" stroke-width="2"><rect x="608" y="337" width="8" height="8"/><rect x="1024" y="337" width="8" height="8"/><rect x="608" y="926" width="8" height="8"/><rect x="1024" y="926" width="8" height="8"/></g>
<g fill="#0a7cff" stroke="#fff" stroke-width="2"><circle cx="820" cy="304" r="5.500"/><circle cx="820" cy="968" r="5.500"/><circle cx="570" cy="636" r="5.500"/><circle cx="1070" cy="636" r="5.500"/></g>
</svg>
</body></html>
